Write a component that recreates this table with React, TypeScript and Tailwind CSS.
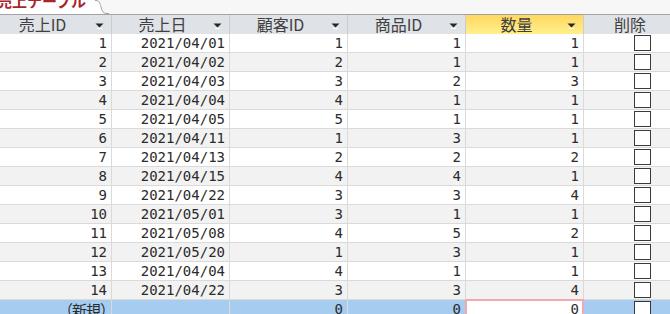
const rows: [number, string, number, number, number][] = [
  [1, '2021/04/01', 1, 1, 1],
  [2, '2021/04/02', 2, 1, 1],
  [3, '2021/04/03', 3, 2, 3],
  [4, '2021/04/04', 4, 1, 1],
  [5, '2021/04/05', 5, 1, 1],
  [6, '2021/04/11', 1, 3, 1],
  [7, '2021/04/13', 2, 2, 2],
  [8, '2021/04/15', 4, 4, 1],
  [9, '2021/04/22', 3, 3, 4],
  [10, '2021/05/01', 3, 1, 1],
  [11, '2021/05/08', 4, 5, 2],
  [12, '2021/05/20', 1, 3, 1],
  [13, '2021/04/04', 4, 1, 1],
  [14, '2021/04/22', 3, 3, 4],
]

function Arrow() {
  return (
    <svg width="9" height="6" viewBox="0 0 9 6" className="shrink-0">
      <path d="M0.5 0.5 H8.5 L4.5 4.5 Z" fill="#262626" />
      <path d="M2 5.5 H7" stroke="#ffffff" strokeWidth="1" />
    </svg>
  )
}

function HeaderCell({ label, pr = 'pr-0', active = false }: { label: string; pr?: string; active?: boolean }) {
  return (
    <div
      className={`flex items-center h-[19px] border-r border-[#c9ccd1] ${
        active ? 'bg-gradient-to-b from-[#ffd75e] to-[#fff08c]' : 'bg-[#dfe2e7]'
      }`}
    >
      <span className={`flex-1 text-center ${pr}`}>{label}</span>
      <span className="mr-[7px] mt-[2px]">
        <Arrow />
      </span>
    </div>
  )
}

function Checkbox() {
  return <div className="w-[17px] h-[16px] border border-[#3a3a3a] bg-white" />
}

function Cell({ children, bg }: { children?: React.ReactNode; bg: string }) {
  return (
    <div className={`h-[19px] border-b border-r border-[#dadada] ${bg} text-right pr-[4px] leading-[19px]`}>
      {children}
    </div>
  )
}

export default function App() {
  return (
    <div
      className="w-[670px] h-[314px] overflow-hidden bg-[#f7f7f7] text-[#262626]"
      style={{ fontFamily: '"Noto Sans CJK JP", "Noto Sans", sans-serif' }}
    >
      <div className="flex h-[14px] overflow-hidden">
        <div className="w-[95px] h-[14px] bg-white overflow-hidden">
          <span className="block -mt-[9px] -ml-[3px] text-[15px] font-bold text-[#a8252b] whitespace-nowrap leading-[20px]">
            売上テーブル
          </span>
        </div>
        <svg width="14" height="14" viewBox="0 0 14 14" className="shrink-0">
          <path d="M0 0 H1 C4 0 5 3 6 7 C7 11 8 13 11 13.5 H0 Z" fill="#ffffff" />
          <path d="M0 0.5 H1 C4 0.5 5 3 6 7 C7 11 8 13 11 13.5 H14" fill="none" stroke="#a3a3a3" strokeWidth="1" />
        </svg>
      </div>
      <div className="border-t border-[#a3a3a3] grid grid-cols-[112px_118px_118px_118px_118px_1fr] text-[16px] leading-[19px] text-[#404040]">
        <HeaderCell label="売上ID" pr="pr-[10px]" />
        <HeaderCell label="売上日" />
        <HeaderCell label="顧客ID" />
        <HeaderCell label="商品ID" />
        <HeaderCell label="数量" active />
        <div className="h-[19px] bg-[#dfe2e7] pl-[30px]">削除</div>
      </div>
      <div
        className="grid grid-cols-[112px_118px_118px_118px_118px_1fr] text-[14px] text-[#2b2b2b]"
        style={{ fontFamily: '"DejaVu Sans Mono", "Noto Sans CJK JP", monospace' }}
      >
        {rows.map((r, i) => {
          const bg = i % 2 === 0 ? 'bg-white' : 'bg-[#f2f2f2]'
          return (
            <div key={r[0]} className="contents">
              <Cell bg={bg}>{r[0]}</Cell>
              <Cell bg={bg}>{r[1]}</Cell>
              <Cell bg={bg}>{r[2]}</Cell>
              <Cell bg={bg}>{r[3]}</Cell>
              <Cell bg={bg}>{r[4]}</Cell>
              <div className={`h-[19px] border-b border-[#dadada] ${bg} flex items-start pt-[1px] pl-[50px]`}>
                <Checkbox />
              </div>
            </div>
          )
        })}
        <Cell bg="bg-[#a6cdf0]">
          <span
            style={{ fontFamily: '"Noto Sans CJK JP", sans-serif' }}
            className="inline-block -mr-[7px] text-[15px] tracking-[-1px]"
          >
            （新規）
          </span>
        </Cell>
        <Cell bg="bg-[#a6cdf0]" />
        <Cell bg="bg-[#a6cdf0]">0</Cell>
        <Cell bg="bg-[#a6cdf0]">0</Cell>
        <div className="h-[19px] -mt-[1px] -ml-[1px] border-2 border-[#f4a7ac] bg-white text-right pr-[3px] leading-[17px]">0</div>
        <div className="h-[19px] bg-[#a6cdf0] flex items-start pt-[1px] pl-[50px]">
          <Checkbox />
        </div>
      </div>
    </div>
  )
}
